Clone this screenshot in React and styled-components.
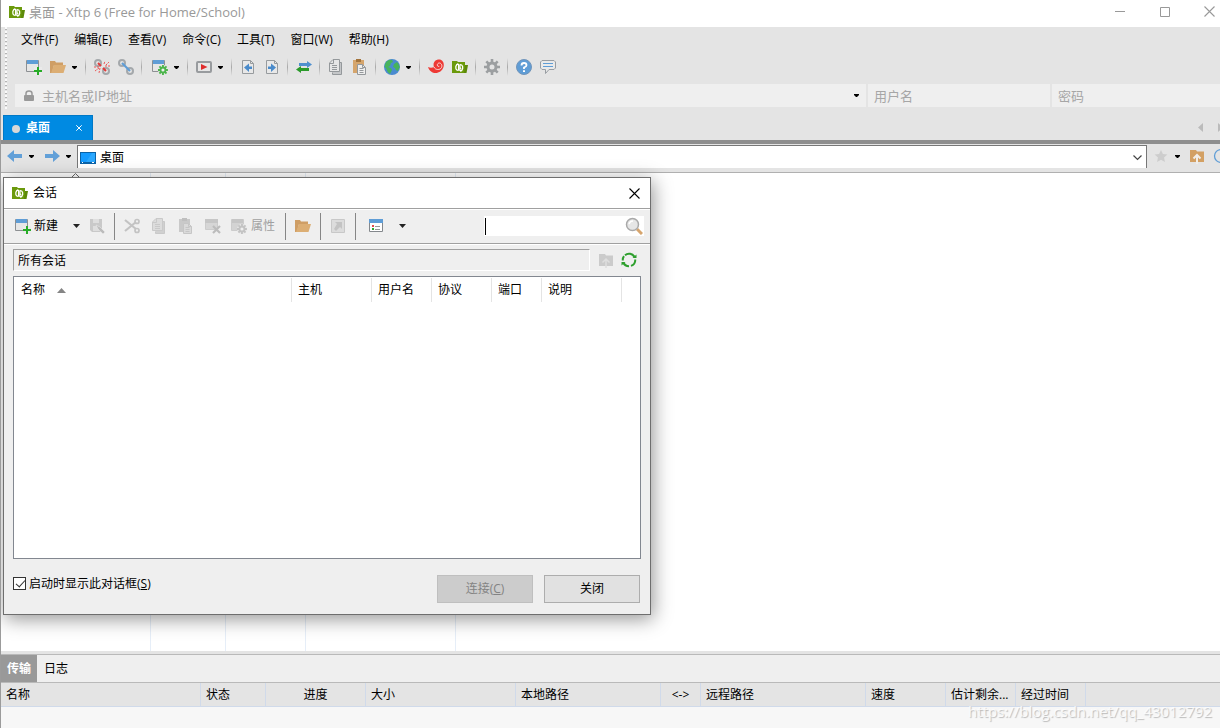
import React from "react";
import styled, { createGlobalStyle } from "styled-components";

const GlobalStyle = createGlobalStyle`
  * {
    box-sizing: border-box;
  }
  body {
    margin: 0;
    overflow: hidden;
    background: white;
  }
  body, button, input, table {
    font-family: "Open Sans", "Noto Sans CJK SC", sans-serif;
    font-size: 12px;
    line-height: 16px;
    color: black;
  }
  svg {
    display: block;
    flex: none;
  }
`;

const Window = styled.div`
  position: relative;
  display: flex;
  flex-direction: column;
  height: 100vh;
  border-left: 1px solid #9b9b9b;
  overflow: hidden;
  white-space: nowrap;
`;

const TitleBar = styled.header`
  display: flex;
  align-items: center;
  flex: none;
  height: 27px;
  padding: 0 0 4px 8px;
  color: #999;
`;

const Title = styled.h1`
  flex: 1;
  margin: 0 0 0 4px;
  font-size: 13px;
  font-weight: normal;
`;

const PlainButton = styled.button`
  display: flex;
  align-items: center;
  justify-content: center;
  flex: none;
  padding: 0;
  border: 0;
  background: none;
`;

const WindowButton = styled(PlainButton)`
  width: 45px;
  height: 22px;
  &:last-child {
    width: 33px;
    padding-left: 12px;
  }
`;

const Chrome = styled.div`
  display: flex;
  flex: none;
  height: 82px;
  background: #e4e4e4;
`;

const GripColumn = styled.div`
  width: 14px;
  padding-left: 4px;
`;

const Grip = styled.div`
  width: 2px;
  height: 100%;
  background: repeating-linear-gradient(#fafafa 0 2px, #b4b4b4 2px 3px, #e4e4e4 3px 4px);
`;

const ChromeRows = styled.div`
  display: flex;
  flex: 1;
  flex-direction: column;
  min-width: 0;
`;

const MenuBar = styled.nav`
  display: flex;
  align-items: center;
  height: 25px;
`;

const MenuItem = styled(PlainButton)`
  padding: 0 10px 0 6px;
`;

const ToolBar = styled.div`
  display: flex;
  align-items: center;
  height: 32px;
  padding: 0 0 2px 7px;
`;

const ToolButton = styled(PlainButton)`
  width: 24px;
  height: 24px;
`;

const CaretButton = styled(PlainButton)`
  width: 12px;
  height: 24px;
  padding-left: 2px;
  justify-content: flex-start;
`;

const ToolSeparator = styled.span`
  width: 1px;
  height: 18px;
  margin: 0 ${props => (props.$loose ? 6 : 4)}px 0 3px;
  background: linear-gradient(#e4e4e4, #a8a8a8, #e4e4e4);
`;

const AddressRow = styled.form`
  display: flex;
  gap: 2px;
  height: 23px;
`;

const Field = styled.label`
  display: flex;
  align-items: center;
  flex: ${props => (props.$width ? `0 0 ${props.$width}px` : "1 1 auto")};
  padding: ${props => (props.$icon ? "0 2px 0 8px" : "0 0 0 6px")};
  gap: 7px;
  background: #efefef;
`;

const FieldInput = styled.input`
  flex: 1;
  min-width: 0;
  padding: 0;
  border: 0;
  outline: 0;
  background: none;
  font-family: "Noto Sans CJK SC", sans-serif;
  font-size: 13px;
  &::placeholder {
    color: #a6a6a6;
    opacity: 1;
  }
`;

const TabStrip = styled.div`
  display: flex;
  align-items: flex-end;
  justify-content: space-between;
  flex: none;
  height: 35px;
  padding-left: 2px;
  background: #e4e4e4;
  border-bottom: 4px solid #8e8e8e;
`;

const Tab = styled.div`
  display: flex;
  align-items: center;
  width: 90px;
  height: 25px;
  padding: 0 10px 0 8px;
  border: 1px solid #0078c6;
  border-bottom: 0;
  background: #008ae2;
`;

const TabDot = styled.span`
  width: 8px;
  height: 8px;
  margin: 2px 6px 0 0;
  border-radius: 4px;
  background: #d8d8d8;
`;

const TabName = styled.span`
  flex: 1;
  color: white;
  font-weight: bold;
`;

const TabArrows = styled.div`
  display: flex;
  align-items: center;
  width: 22px;
  height: 25px;
  gap: 15px;
  overflow: hidden;
`;

const NavBar = styled.div`
  display: flex;
  flex: none;
  height: 29px;
  padding: 1px 0 5px 6px;
  background: #e4e4e4;
  border-bottom: 1px solid #b0b0b0;
`;

const HistoryButton = styled(PlainButton)`
  width: 16px;
  height: 22px;
`;

const HistoryCaret = styled(CaretButton)`
  width: ${props => (props.$last ? 16 : 22)}px;
  height: 22px;
  padding-left: ${props => (props.$last ? 5 : 6)}px;
`;

const PathBox = styled.label`
  display: flex;
  align-items: center;
  flex: 1;
  height: 23px;
  padding: 2px 4px 0 2px;
  gap: 4px;
  border: 1px solid #777;
  border-bottom: 0;
  background: white;
`;

const PathInput = styled.input`
  flex: 1;
  min-width: 0;
  padding: 0;
  border: 0;
  outline: 0;
`;

const NavTools = styled.div`
  display: flex;
  align-items: center;
  width: 73px;
  height: 22px;
  padding-left: 2px;
  overflow: hidden;
`;

const Workspace = styled.main`
  display: flex;
  flex: 1;
  min-height: 0;
  background: white;
`;

const FileColumn = styled.div`
  display: flex;
  justify-content: center;
  width: ${props => props.$width}px;
  border-right: 1px solid #e6eef8;
`;

const TransferPanel = styled.section`
  flex: none;
  height: 77px;
  background: #f7f7f7;
  border-top: 3px solid #e4e4e4;
`;

const PanelTabs = styled.div`
  display: flex;
  height: 29px;
  border: 1px solid #b9b9b9;
  border-width: 1px 0;
  background: #efefef;
`;

const PanelTab = styled(PlainButton)`
  width: ${props => (props.$active ? 36 : 38)}px;
  background: ${props => (props.$active ? "#999" : "none")};
  color: ${props => (props.$active ? "white" : "black")};
  font-weight: ${props => (props.$active ? "bold" : "normal")};
`;

const TransferTable = styled.table`
  width: 100%;
  table-layout: fixed;
  border-collapse: separate;
  border-spacing: 0;
  th {
    height: 24px;
    padding: 0 0 0 5px;
    border: 1px solid #d0daea;
    border-width: 0 1px 1px 0;
    background: #e4e4e4;
    font-weight: normal;
    text-align: left;
    overflow: hidden;
  }
  th:nth-child(3),
  th:nth-child(6) {
    padding: 0;
    text-align: center;
  }
  th:last-child {
    border-right: 0;
  }
`;

const Watermark = styled.div`
  position: absolute;
  right: 8px;
  bottom: 8px;
  font-size: 15px;
  line-height: 18px;
  color: rgba(255, 255, 255, 0.8);
  text-shadow: 1px 1px 1px rgba(0, 0, 0, 0.25);
`;

const Dialog = styled.section`
  position: absolute;
  top: 177px;
  left: 2px;
  display: flex;
  flex-direction: column;
  width: 648px;
  height: 438px;
  border: 1px solid #6e6e6e;
  background: #efefef;
  box-shadow: 2px 4px 18px rgba(0, 0, 0, 0.42);
`;

const DialogTitle = styled.div`
  display: flex;
  align-items: center;
  flex: none;
  height: 30px;
  padding: 0 10px 0 8px;
  gap: 5px;
  background: white;
`;

const DialogName = styled.h2`
  flex: 1;
  margin: 0;
  font-size: 12px;
  font-weight: normal;
`;

const DialogTools = styled.div`
  display: flex;
  align-items: center;
  flex: none;
  height: 36px;
  padding: 0 6px 0 7px;
  border-top: 1px solid #a0a0a0;
  border-bottom: 1px solid #a0a0a0;
  box-shadow: inset 0 1px white, 0 1px white;
`;

const DialogButton = styled(PlainButton)`
  min-width: 27px;
  height: 28px;
  gap: 4px;
  padding: ${props => (props.$wide ? "0 6px 0 5px" : "0")};
  color: ${props => (props.disabled ? "#a0a0a0" : "black")};
`;

const NewButton = styled(PlainButton)`
  height: 28px;
  padding: 0 3px 0 4px;
  gap: 3px;
  svg:last-child {
    margin-left: 12px;
  }
`;

const ViewButton = styled(PlainButton)`
  height: 28px;
  padding: 0 5px 0 9px;
  gap: 15px;
`;

const DialogSeparator = styled.span`
  width: 1px;
  height: 27px;
  margin: 0 3px 0 4px;
  background: #868686;
`;

const SearchBox = styled.label`
  display: flex;
  align-items: center;
  width: 160px;
  height: 20px;
  margin-left: auto;
  padding: 0 1px;
  background: white;
`;

const TextCursor = styled.span`
  width: 1px;
  height: 17px;
  background: black;
`;

const SearchInput = styled(PathInput)`
  background: none;
`;

const SessionBar = styled.div`
  display: flex;
  align-items: center;
  flex: none;
  height: 32px;
  padding: 0 13px 0 9px;
`;

const SessionPath = styled.input`
  flex: 1;
  height: 22px;
  margin-right: 8px;
  padding: 0 4px;
  border: 1px solid white;
  border-top-color: #a0a0a0;
  border-left-color: #a0a0a0;
  outline: 0;
  background: #efefef;
`;

const SmallButton = styled(PlainButton)`
  & + & {
    margin-left: 7px;
  }
`;

const SessionList = styled.div`
  flex: 1;
  margin: 0 9px;
  border: 1px solid #828790;
  background: white;
`;

const SessionTable = styled.table`
  width: 100%;
  table-layout: fixed;
  border-collapse: separate;
  border-spacing: 0;
  th {
    height: 26px;
    padding: 0 0 0 6px;
    background: linear-gradient(#e4e4e4, #e4e4e4) right / 1px 24px no-repeat;
    font-weight: normal;
    text-align: left;
  }
  th:first-child {
    padding-left: 7px;
  }
  th:last-child {
    background: none;
  }
`;

const Sorted = styled.span`
  display: flex;
  align-items: center;
  gap: 12px;
`;

const DialogFooter = styled.footer`
  display: flex;
  flex: none;
  height: 55px;
  padding: 16px 10px 0 9px;
  gap: 11px;
`;

const StartupLabel = styled.label`
  display: flex;
  align-items: center;
  flex: 1;
  height: 17px;
  gap: 3px;
`;

const Checkbox = styled.input`
  appearance: none;
  position: relative;
  width: 13px;
  height: 13px;
  margin: 0;
  border: 1px solid #333;
  background: white;
  &:checked::after {
    content: "";
    position: absolute;
    top: 0;
    left: 4px;
    width: 4px;
    height: 8px;
    border: solid #333;
    border-width: 0 1px 1px 0;
    transform: rotate(42deg);
  }
`;

const DialogAction = styled(PlainButton)`
  width: 96px;
  height: 28px;
  border: 1px solid ${props => (props.disabled ? "#bfbfbf" : "#adadad")};
  background: ${props => (props.disabled ? "#ccc" : "#e1e1e1")};
  color: ${props => (props.disabled ? "#838383" : "black")};
`;

const Icon = ({ children, size = 16 }) => (
  <svg width={size} height={size} viewBox="0 0 16 16" fill="none" aria-hidden="true">
    {children}
  </svg>
);

const Caret = ({ wide }) => (
  <svg width={wide ? 7 : 5} height={wide ? 4 : 3} viewBox={wide ? "0 0 7 4" : "0 0 5 3"} aria-hidden="true">
    <path d={wide ? "M0 0h7L3.5 4z" : "M0 0h5v1L3 3H2L0 1z"} fill={wide ? "#222" : "#000"} />
  </svg>
);

const LogoIcon = () => (
  <Icon>
    <path d="M0 2h5l1 1h7v11H0z" fill="#6b9a0c" />
    <path d="M13 6h3l-1.500 8H12z" fill="#5c8a08" />
    <path d="M6.300 4.600C3.500 5.500 2.900 9.500 5 11.300M6.600 5v5.200q0 1.300-1.400 1.100" stroke="white" strokeWidth="1.300" />
    <path d="M8.200 12.400c2.800-.9 3.400-4.900 1.300-6.700M7.900 12V6.800q0-1.300 1.400-1.100M7.900 9.800l1.300-.8" stroke="white" strokeWidth="1.300" />
  </Icon>
);

const NewIcon = () => (
  <Icon>
    <path d="M.5 1.5h12v11H.5z" fill="#e6e6e6" stroke="#8d9093" />
    <path d="M1 1h11v4H1z" fill="#5f9dd6" />
    <path d="M8 8h8v8H8z" fill="#eaeaea" />
    <path d="M12 8v8M8 12h8" stroke="#27ac27" strokeWidth="2" />
  </Icon>
);

const FolderIcon = () => (
  <Icon>
    <path d="M0 2h5l1 1.5h7V6H4L2 14H0z" fill="#cf9e65" />
    <path d="M4 6h12l-2.500 8H1z" fill="#dcae74" />
  </Icon>
);

const BrokenLinkIcon = () => (
  <Icon>
    <circle cx="4" cy="4" r="3" stroke="#a4a8ab" strokeWidth="2" />
    <circle cx="12" cy="12" r="3" stroke="#a4a8ab" strokeWidth="2" />
    <path d="m4 4 3 3M9 9l3 3" stroke="#e33a3a" strokeWidth="2" />
    <path d="m10 5 1-3M12 6l3-3M11 7h5M6 9l-1 5M5 9l-4 3M5 8H0" stroke="#ed5555" strokeDasharray="2 1" />
  </Icon>
);

const LinkIcon = () => (
  <Icon>
    <circle cx="4" cy="4" r="3" stroke="#a4a8ab" strokeWidth="2" />
    <circle cx="12" cy="12" r="3" stroke="#a4a8ab" strokeWidth="2" />
    <path d="m4 4 8 8" stroke="#5f9dd6" strokeWidth="2.200" />
  </Icon>
);

const gearTeeth = "M8 0v16M0 8h16M2.300 2.300l11.400 11.400M13.700 2.300L2.300 13.700";

const WindowGearIcon = ({ gray }) => (
  <Icon>
    <path d="M.5 1.500h12v11H.5z" fill={gray ? "#d3d3d3" : "#e6e6e6"} stroke={gray ? "#ccc" : "#8d9093"} />
    <path d="M1 1h11v4H1z" fill={gray ? "#c6c6c6" : "#5f9dd6"} />
    <g transform="translate(6 6) scale(.62)">
      <circle cx="8" cy="8" r="8" fill="#e8e8e8" />
      <path d={gearTeeth} stroke={gray ? "#c3c3c3" : "#4bb54b"} strokeWidth="3" />
      <circle cx="8" cy="8" r="4" fill="#efefef" stroke={gray ? "#c3c3c3" : "#4bb54b"} strokeWidth="3" />
    </g>
  </Icon>
);

const PlayIcon = () => (
  <Icon>
    <rect x="1" y="3" width="14" height="10" rx="1" fill="#e6e6e6" stroke="#989b9e" strokeWidth="2" />
    <path d="m5 5 6.500 3L5 11z" fill="#e02c2c" />
  </Icon>
);

const PageArrowIcon = ({ back }) => (
  <Icon>
    <path d="M2.500 1.500h8l3 3v10h-11z" fill="#e8e8e8" stroke="#979b9e" />
    <path d="M10.500 1.500v3h3" stroke="#979b9e" />
    <path d={back ? "M4 8.500l5-4v3h3v2.500H9v3z" : "M12 8.500l-5-4v3H4v2.500h3v3z"} fill="#4a8bcb" />
  </Icon>
);

const TransferIcon = () => (
  <Icon>
    <path d="M3 4h8V2l5 3.500L11 9V7H3z" fill="#4f90cf" />
    <path d="M13 9H5V7L0 10.500 5 14v-2h8z" fill="#2b9a2b" />
  </Icon>
);

const CopyIcon = ({ gray }) => {
  const line = gray ? "#c9c9c9" : "#94989b";
  return (
    <Icon>
      <path d="M5.500 3.500h8v12h-9v-2" fill={gray ? "#d0d0d0" : "#c4c6c8"} stroke={line} />
      <path d="M5 .5h6.500v12h-10V4z" fill={gray ? "#dcdcdc" : "#e6e6e6"} stroke={line} />
      <path d="M5.500 1v3.500H2M4 6.500h5M4 8.500h5M4 10.500h5" stroke={line} />
    </Icon>
  );
};

const PasteIcon = ({ gray }) => {
  const line = gray ? "#c6c6c6" : "#94989b";
  return (
    <Icon>
      <path d="M1 1h11v13H1z" fill={gray ? "#c9c9c9" : "#d5a56c"} />
      <path d="M4 0h5v3H4z" fill={gray ? "#bfbfbf" : "#a3743c"} />
      <path d="M5.500 5.500h5l3 3v7h-8z" fill={gray ? "#dadada" : "#eee"} stroke={line} />
      <path d="M10.500 5.500v3h3M7.500 9.500h4M7.500 11.500h4M7.500 13.500h4" stroke={line} />
    </Icon>
  );
};

const GlobeIcon = () => (
  <Icon>
    <circle cx="8" cy="8" r="8" fill="#4a8bd0" />
    <path d="M2 3q3-3 6-2l1 2-2 1-1 3-2 1 3 1 1 2-2 4Q3 13 2 9L.5 8Q1 5 2 3zM10 5l3-2q2 2 2.800 5l-2 4-2-1-.8-2-2-1z" fill="#47b35c" />
  </Icon>
);

const ShellIcon = () => (
  <Icon>
    <path d="M0 8q3 1.500 6 0C4.500 4 7 .5 11 .5c4 0 5.500 4 4.500 7.500C13.500 15 3 17 0 8z" fill="#ee3a35" />
    <path d="M6 8c1 3 6 3.500 7.500.5C15 5 11.500 3 10 4.500S9.500 8 11.300 7.300" stroke="#f6dedd" strokeWidth="1" />
  </Icon>
);

const GearIcon = () => (
  <Icon>
    <path d={gearTeeth} stroke="#9c9fa1" strokeWidth="2.600" />
    <circle cx="8" cy="8" r="4" fill="#e4e4e4" stroke="#9c9fa1" strokeWidth="3" />
  </Icon>
);

const HelpIcon = () => (
  <Icon>
    <circle cx="8" cy="8" r="7.500" fill="#5f9dd6" stroke="#7295ba" />
    <path d="M5.500 6.500Q5.500 4 8 4t2.500 2.200Q10.500 7.500 8 8.500V10" stroke="white" strokeWidth="1.800" />
    <path d="M7 11.300h2v1.800H7z" fill="white" />
  </Icon>
);

const ChatIcon = () => (
  <Icon>
    <path d="M2 1.500h12l1.500 1.500v6L14 10.500H9L5.500 14.500v-4H2L.5 9V3z" fill="#e9e9e9" stroke="#989da2" />
    <path d="M3 4.500h10M3 7.500h10" stroke="#5f9dd6" />
  </Icon>
);

const LockIcon = () => (
  <svg width="12" height="12" viewBox="0 0 12 12" fill="none" aria-hidden="true">
    <path d="M3 5V3.500Q3 1 6 1t3 2.500V5" stroke="#999" strokeWidth="1.500" />
    <rect x="1" y="5" width="10" height="6" rx="1" fill="#999" />
  </svg>
);

const ArrowIcon = ({ back }) => (
  <Icon>
    <path d={back ? "M0 8l7-6v4h8v4H7v4z" : "M15 8L8 2v4H0v4h8v4z"} fill="#62a0d8" />
  </Icon>
);

const DesktopIcon = () => (
  <svg width="16" height="12" viewBox="0 0 16 12" aria-hidden="true">
    <path d="M0 0h16v12H0z" fill="#0a63a8" />
    <path d="M1 1h14v9H1z" fill="#149bff" />
    <path d="m6 10 6-9h3v9z" fill="#2ba8ff" />
    <path d="M2 10h1v1H2zM12 10h2v1h-2z" fill="white" />
  </svg>
);

const ChevronIcon = () => (
  <svg width="9" height="6" viewBox="0 0 9 6" fill="none" aria-hidden="true">
    <path d="m.5 .5 4 4 4-4" stroke="#444" strokeWidth="1.200" />
  </svg>
);

const StarIcon = () => (
  <Icon size={14}>
    <path d="m8 1 2.200 4.700 5.100.6-3.800 3.500 1 5.100L8 12.400l-4.500 2.500 1-5.100L.7 6.300l5.100-.6z" fill="#cdcdcd" />
  </Icon>
);

const FolderUpIcon = ({ gray }) => (
  <Icon>
    <path d="M1 2h6l1 1.500h7V14H1z" fill={gray ? "#cbcbcb" : "#d3a063"} />
    <path d="M8 16V8M4.500 10.500 8 7l3.500 3.500" stroke={gray ? "#dedede" : "#f2eee8"} strokeWidth={gray ? 1.5 : 2} />
  </Icon>
);

const RefreshIcon = ({ color }) => (
  <Icon>
    <path d="M4 3.200A6.200 6.200 0 0 1 13.500 5M14.200 7.500A6.200 6.200 0 0 1 10 13.900M8 14.200A6.200 6.200 0 0 1 2.300 10.500M1.800 8.500A6.200 6.200 0 0 1 3 4.200" stroke={color} strokeWidth="2" />
    <path d="M11.500 6h4V2.500zM4.500 10h-4v3.500z" fill={color} />
  </Icon>
);

const ReloadIcon = () => (
  <Icon>
    <circle cx="8" cy="8" r="6.500" stroke="#5f9dd6" strokeWidth="1.300" />
  </Icon>
);

const SaveIcon = () => (
  <Icon>
    <path d="M1 1h12v13H3l-2-2z" fill="#c9c9c9" />
    <path d="M4 1h6v4H4zM4 8h6v5H4z" fill="#dedede" />
    <path d="m7 7 2 4 5 5 2-2-5-5z" fill="#bcbcbc" stroke="#efefef" strokeWidth=".5" />
  </Icon>
);

const CutIcon = () => (
  <Icon>
    <path d="m1 2 11 9M1 13 12 4" stroke="#c3c3c3" strokeWidth="2.200" />
    <circle cx="13" cy="3.500" r="2" stroke="#c3c3c3" strokeWidth="1.700" />
    <circle cx="13" cy="12.500" r="2" stroke="#c3c3c3" strokeWidth="1.700" />
  </Icon>
);

const DeleteIcon = () => (
  <Icon>
    <path d="M.5 1.500h12v10H.5z" fill="#d6d6d6" stroke="#ccc" />
    <path d="M0 1h13v4H0z" fill="#c6c6c6" />
    <path d="m8 8 7 7M15 8l-7 7" stroke="#bcbcbc" strokeWidth="2.200" />
  </Icon>
);

const ShortcutIcon = () => (
  <Icon>
    <path d="M1.500 1.500h13v13h-13z" fill="#dcdcdc" stroke="#c8c8c8" />
    <path d="M5 4h7v7l-2-2-4 4-2-2 3-5z" fill="#c3c3c3" />
  </Icon>
);

const ViewIcon = () => (
  <Icon>
    <path d="M1.500 2.500h13v11h-13z" fill="white" stroke="#84888c" />
    <path d="M1 1h14v4H1z" fill="#5f9dd6" />
    <path d="M4 7h2v2H4z" fill="#e34b4b" />
    <path d="M4 10h2v2H4z" fill="#2fa82f" />
    <path d="M7 8.500h5M7 11.500h5" stroke="#999" />
  </Icon>
);

const SearchIcon = () => (
  <svg width="18" height="18" viewBox="0 0 18 18" fill="none" aria-hidden="true">
    <path d="m12 12 5 5" stroke="#d6a56e" strokeWidth="3" />
    <circle cx="7.500" cy="7.500" r="6" fill="#e6e6e6" stroke="#a9a9a9" strokeWidth="1.500" />
    <path d="M4 7q1-3 4-3" stroke="white" strokeWidth="1.500" />
  </svg>
);

const CloseIcon = ({ color, size = 11 }) => (
  <svg width={size} height={size} viewBox="0 0 11 11" fill="none" aria-hidden="true">
    <path d="m.5.5 10 10M10.500.5l-10 10" stroke={color} strokeWidth={size < 11 ? 1.8 : 1.1} />
  </svg>
);

const menus = ["文件(F)", "编辑(E)", "查看(V)", "命令(C)", "工具(T)", "窗口(W)", "帮助(H)"];

// groups are divided by separators, "caret" adds a drop-down arrow
const toolGroups = [
  [["新建", <NewIcon />], ["打开", <FolderIcon />], "caret"],
  [["断开", <BrokenLinkIcon />], ["重新连接", <LinkIcon />]],
  [["会话属性", <WindowGearIcon />], "caret"],
  [["运行", <PlayIcon />], "caret"],
  [["下载", <PageArrowIcon back />], ["上传", <PageArrowIcon />]],
  [["传输", <TransferIcon />]],
  [["复制", <CopyIcon />], ["粘贴", <PasteIcon />]],
  [["编码", <GlobeIcon />], "caret"],
  [["Xshell", <ShellIcon />], ["Xftp", <LogoIcon />]],
  [["选项", <GearIcon />]],
  [["帮助", <HelpIcon />], ["反馈", <ChatIcon />]]
];

const transferColumns = [
  ["名称", 200],
  ["状态", 65],
  ["进度", 100],
  ["大小", 150],
  ["本地路径", 145],
  ["<->", 40],
  ["远程路径", 165],
  ["速度", 80],
  ["估计剩余...", 70],
  ["经过时间", 70]
];

const sessionColumns = [
  ["主机", 80],
  ["用户名", 60],
  ["协议", 60],
  ["端口", 50],
  ["说明", 80]
];

function MainToolBar() {
  return (
    <ToolBar>
      {toolGroups.map((group, index) => (
        <React.Fragment key={index}>
          {index > 0 && <ToolSeparator $loose={index === 2} />}
          {group.map(tool =>
            tool === "caret" ? (
              <CaretButton key="caret" aria-label="更多">
                <Caret />
              </CaretButton>
            ) : (
              <ToolButton key={tool[0]} aria-label={tool[0]}>
                {tool[1]}
              </ToolButton>
            )
          )}
        </React.Fragment>
      ))}
    </ToolBar>
  );
}

function SessionDialog() {
  return (
    <Dialog role="dialog" aria-label="会话">
      <DialogTitle>
        <LogoIcon />
        <DialogName>会话</DialogName>
        <PlainButton aria-label="关闭会话">
          <CloseIcon color="black" />
        </PlainButton>
      </DialogTitle>
      <DialogTools>
        <NewButton>
          <NewIcon />
          新建
          <Caret wide />
        </NewButton>
        <DialogButton disabled aria-label="另存为"><SaveIcon /></DialogButton>
        <DialogSeparator />
        <DialogButton disabled aria-label="剪切"><CutIcon /></DialogButton>
        <DialogButton disabled aria-label="复制"><CopyIcon gray /></DialogButton>
        <DialogButton disabled aria-label="粘贴"><PasteIcon gray /></DialogButton>
        <DialogButton disabled aria-label="删除"><DeleteIcon /></DialogButton>
        <DialogButton disabled $wide>
          <WindowGearIcon gray />
          属性
        </DialogButton>
        <DialogSeparator />
        <DialogButton aria-label="打开文件夹"><FolderIcon /></DialogButton>
        <DialogSeparator />
        <DialogButton disabled aria-label="快捷方式"><ShortcutIcon /></DialogButton>
        <DialogSeparator />
        <ViewButton aria-label="视图">
          <ViewIcon />
          <Caret wide />
        </ViewButton>
        <SearchBox>
          <TextCursor />
          <SearchInput aria-label="搜索" />
          <SearchIcon />
        </SearchBox>
      </DialogTools>
      <SessionBar>
        <SessionPath aria-label="路径" defaultValue="所有会话" />
        <SmallButton disabled aria-label="上一级"><FolderUpIcon gray /></SmallButton>
        <SmallButton aria-label="刷新"><RefreshIcon color="#2d9f2d" /></SmallButton>
      </SessionBar>
      <SessionList>
        <SessionTable>
          <colgroup>
            <col width="278" />
            {sessionColumns.map(([name, width]) => (
              <col key={name} width={width} />
            ))}
            <col />
          </colgroup>
          <thead>
            <tr>
              <th>
                <Sorted>
                  名称
                  <svg width="9" height="5" viewBox="0 0 9 5" aria-hidden="true">
                    <path d="M4.500 0 9 5H0z" fill="#858585" />
                  </svg>
                </Sorted>
              </th>
              {sessionColumns.map(([name]) => (
                <th key={name}>{name}</th>
              ))}
              <th />
            </tr>
          </thead>
        </SessionTable>
      </SessionList>
      <DialogFooter>
        <StartupLabel>
          <Checkbox type="checkbox" defaultChecked />
          <span>启动时显示此对话框(<u>S</u>)</span>
        </StartupLabel>
        <DialogAction disabled>
          <span>连接(<u>C</u>)</span>
        </DialogAction>
        <DialogAction>关闭</DialogAction>
      </DialogFooter>
    </Dialog>
  );
}

export default function App() {
  return (
    <>
      <GlobalStyle />
      <Window>
        <TitleBar>
          <LogoIcon />
          <Title>桌面 - Xftp 6 (Free for Home/School)</Title>
          <WindowButton aria-label="最小化">
            <svg width="10" height="1"><path d="M0 .5h10" stroke="#999" /></svg>
          </WindowButton>
          <WindowButton aria-label="最大化">
            <svg width="10" height="10"><path d="M.5.5h9v9h-9z" stroke="#999" fill="none" /></svg>
          </WindowButton>
          <WindowButton aria-label="关闭窗口">
            <CloseIcon color="#999" />
          </WindowButton>
        </TitleBar>
        <Chrome>
          <GripColumn>
            <Grip />
          </GripColumn>
          <ChromeRows>
            <MenuBar>
              {menus.map(menu => (
                <MenuItem key={menu}>{menu}</MenuItem>
              ))}
            </MenuBar>
            <MainToolBar />
            <AddressRow>
              <Field $icon>
                <LockIcon />
                <FieldInput aria-label="主机" placeholder="主机名或IP地址" />
                <CaretButton type="button" aria-label="历史主机">
                  <Caret />
                </CaretButton>
              </Field>
              <Field $width={182}>
                <FieldInput aria-label="用户" placeholder="用户名" />
              </Field>
              <Field $width={168}>
                <FieldInput aria-label="密码" placeholder="密码" />
              </Field>
            </AddressRow>
          </ChromeRows>
        </Chrome>
        <TabStrip>
          <Tab>
            <TabDot />
            <TabName>桌面</TabName>
            <PlainButton aria-label="关闭标签">
              <CloseIcon color="white" size={6} />
            </PlainButton>
          </Tab>
          <TabArrows>
            <svg width="5" height="9"><path d="M5 0v9L0 4.500z" fill="#bbb" /></svg>
            <svg width="5" height="9"><path d="M0 0v9l5-4.500z" fill="#bbb" /></svg>
          </TabArrows>
        </TabStrip>
        <NavBar>
          <HistoryButton aria-label="后退"><ArrowIcon back /></HistoryButton>
          <HistoryCaret aria-label="后退历史"><Caret /></HistoryCaret>
          <HistoryButton aria-label="前进"><ArrowIcon /></HistoryButton>
          <HistoryCaret $last aria-label="前进历史"><Caret /></HistoryCaret>
          <PathBox>
            <DesktopIcon />
            <PathInput aria-label="位置" defaultValue="桌面" />
            <ChevronIcon />
          </PathBox>
          <NavTools>
            <ToolButton aria-label="收藏"><StarIcon /></ToolButton>
            <CaretButton aria-label="收藏列表"><Caret /></CaretButton>
            <ToolButton aria-label="上一级"><FolderUpIcon /></ToolButton>
            <ToolButton aria-label="刷新"><ReloadIcon /></ToolButton>
          </NavTools>
        </NavBar>
        <Workspace>
          <FileColumn $width={150}>
            <svg width="9" height="5" fill="none"><path d="m.5 4.500 4-4 4 4" stroke="#666" /></svg>
          </FileColumn>
          <FileColumn $width={75} />
          <FileColumn $width={80} />
          <FileColumn $width={150} />
        </Workspace>
        <TransferPanel>
          <PanelTabs>
            <PanelTab $active>传输</PanelTab>
            <PanelTab>日志</PanelTab>
          </PanelTabs>
          <TransferTable>
            <colgroup>
              {transferColumns.map(([name, width]) => (
                <col key={name} width={width} />
              ))}
              <col />
            </colgroup>
            <thead>
              <tr>
                {transferColumns.map(([name]) => (
                  <th key={name}>{name}</th>
                ))}
                <th />
              </tr>
            </thead>
          </TransferTable>
        </TransferPanel>
        <SessionDialog />
        <Watermark>https://blog.csdn.net/qq_43012792</Watermark>
      </Window>
    </>
  );
}
